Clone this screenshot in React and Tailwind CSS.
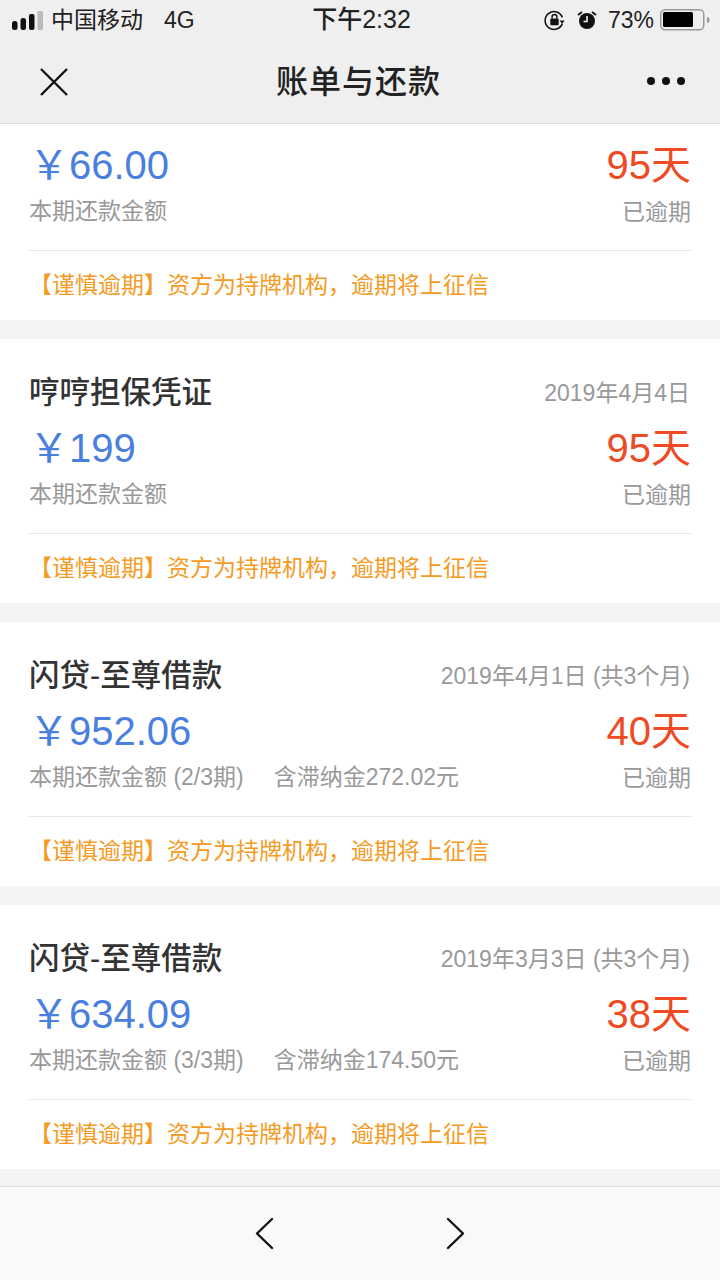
import React from 'react';

function Card({ title, date, amount, label, fee, days }) {
  return (
    <div className="bg-white h-[264px] px-[29px] flex flex-col shrink-0">
      <div className="h-[87px] shrink-0 pt-[33px]">
        <div className="h-[40px] flex items-center justify-between">
          <span className="text-[30.5px] leading-[40px] font-medium text-[#333333]">{title}</span>
          <span className="text-[23px] leading-[30px] text-[#999999] mr-[1px] mt-[1px]">{date}</span>
        </div>
      </div>
      <Body amount={amount} label={label} fee={fee} days={days} />
    </div>
  );
}

function Body({ amount, label, fee, days }) {
  return (
    <>
      <div className="flex justify-between h-[44px] shrink-0 items-center">
        <span className="text-[40px] leading-[44px] text-[#4a7fdf]">￥{amount}</span>
        <span className="text-[40px] leading-[44px] text-[#ee4a24]">{days}天</span>
      </div>
      <div className="mt-[2px] flex justify-between h-[44px] shrink-0 items-center">
        <span className="text-[23px] leading-[30px] text-[#999999] flex gap-[30px]">
          <span>{label}</span>
          {fee && <span>{fee}</span>}
        </span>
        <span className="text-[23px] leading-[30px] text-[#999999] mt-[1px]">已逾期</span>
      </div>
      <div className="mt-[17px] border-t border-[#e6e6e6] h-[70px] shrink-0 flex items-center text-[23px] text-[#f59a23]">
        【谨慎逾期】资方为持牌机构，逾期将上征信
      </div>
    </>
  );
}

export default function App() {
  return (
    <div className="w-[720px] h-[1280px] overflow-hidden flex flex-col bg-[#f4f4f4] font-['Liberation_Sans','Noto_Sans_CJK_SC',sans-serif]">
      <div className="h-[124px] shrink-0 bg-[#efefef] border-b border-[#dddddd] flex flex-col">
        <div className="h-[40px] flex items-center justify-between pl-[12px] pr-[10px] text-[23px] text-[#222222]">
          <div className="flex items-center w-[260px]">
            <svg width="32" height="19" viewBox="0 0 32 19">
              <rect x="0" y="10" width="5.500" height="9" rx="2.500" fill="#111" />
              <rect x="8.500" y="7" width="5.500" height="12" rx="2.500" fill="#111" />
              <rect x="17" y="3" width="5.500" height="16" rx="2" fill="#111" />
              <rect x="25.500" y="0" width="5.500" height="19" rx="1.500" fill="#bbb" />
            </svg>
            <span className="ml-[7px]">中国移动</span>
            <span className="ml-[21px]">4G</span>
          </div>
          <span className="text-[25px] font-medium ml-[1px]">下午2:32</span>
          <div className="flex items-center w-[260px] justify-end">
            <svg width="23" height="23" viewBox="0 0 22 22" fill="none">
              <path d="M18.500 14a8.500 8.500 0 1 1 0-6" stroke="#111" strokeWidth="1.500" />
              <path d="M20.800 11h-5l2.500 3z" fill="#111" />
              <rect x="7" y="9" width="8" height="6.500" rx="1" fill="#111" />
              <path d="M8.700 9V7.500a2.300 2.300 0 0 1 4.600 0V9" stroke="#111" strokeWidth="1.400" />
            </svg>
            <svg className="ml-[11px]" width="20" height="20" viewBox="0 0 20 20" fill="none">
              <circle cx="10" cy="11" r="8" fill="#111" />
              <path d="M10 6v5.500H6.500" stroke="#efefef" strokeWidth="1.600" />
              <path d="M1 5l4-3M19 5l-4-3" stroke="#111" strokeWidth="1.800" />
            </svg>
            <span className="ml-[11px]">73%</span>
            <svg className="ml-[6px]" width="50" height="22" viewBox="0 0 50 22" fill="none">
              <rect x="0.750" y="0.750" width="43" height="20" rx="4.500" stroke="#999" strokeWidth="1.500" />
              <rect x="3" y="3" width="30" height="15" rx="1.500" fill="#000" />
              <path d="M47 8c2 0 2.500 1.500 2.500 3s-.5 3-2.500 3z" fill="#999" />
            </svg>
          </div>
        </div>
        <div className="flex-1 flex items-center justify-between pl-[38px] pr-[33px]">
          <svg width="32" height="32" viewBox="0 0 32 32" fill="none">
            <path d="M3 3l26 26M29 3L3 29" stroke="#111" strokeWidth="2.400" />
          </svg>
          <span className="text-[32px] text-[#222222] font-medium tracking-[1px]">账单与还款</span>
          <div className="flex gap-[7px] w-[40px] -mt-[2px]">
            <span className="w-[8px] h-[8px] rounded-full bg-[#111111]" />
            <span className="w-[8px] h-[8px] rounded-full bg-[#111111]" />
            <span className="w-[8px] h-[8px] rounded-full bg-[#111111]" />
          </div>
        </div>
      </div>

      <div className="flex-1 overflow-hidden flex flex-col gap-[19px]">
        <div className="bg-white h-[196px] px-[29px] pt-[19px] shrink-0 flex flex-col">
          <Body amount="66.00" label="本期还款金额" days="95" />
        </div>
        <Card title="哼哼担保凭证" date="2019年4月4日" amount="199" label="本期还款金额" days="95" />
        <Card title="闪贷-至尊借款" date="2019年4月1日 (共3个月)" amount="952.06" label="本期还款金额 (2/3期)" fee="含滞纳金272.02元" days="40" />
        <Card title="闪贷-至尊借款" date="2019年3月3日 (共3个月)" amount="634.09" label="本期还款金额 (3/3期)" fee="含滞纳金174.50元" days="38" />
      </div>

      <div className="h-[94px] shrink-0 bg-[#f9f9fb] border-t border-[#dddddd] flex items-center justify-center gap-[152px]">
        <svg width="38" height="38" viewBox="0 0 38 38" fill="none">
          <path d="M26 4L11 18.500 26 33" stroke="#111" strokeWidth="2.400" strokeLinecap="round" strokeLinejoin="round" />
        </svg>
        <svg width="38" height="38" viewBox="0 0 38 38" fill="none">
          <path d="M12 4l15 14.500L12 33" stroke="#111" strokeWidth="2.400" strokeLinecap="round" strokeLinejoin="round" />
        </svg>
      </div>
    </div>
  );
}
